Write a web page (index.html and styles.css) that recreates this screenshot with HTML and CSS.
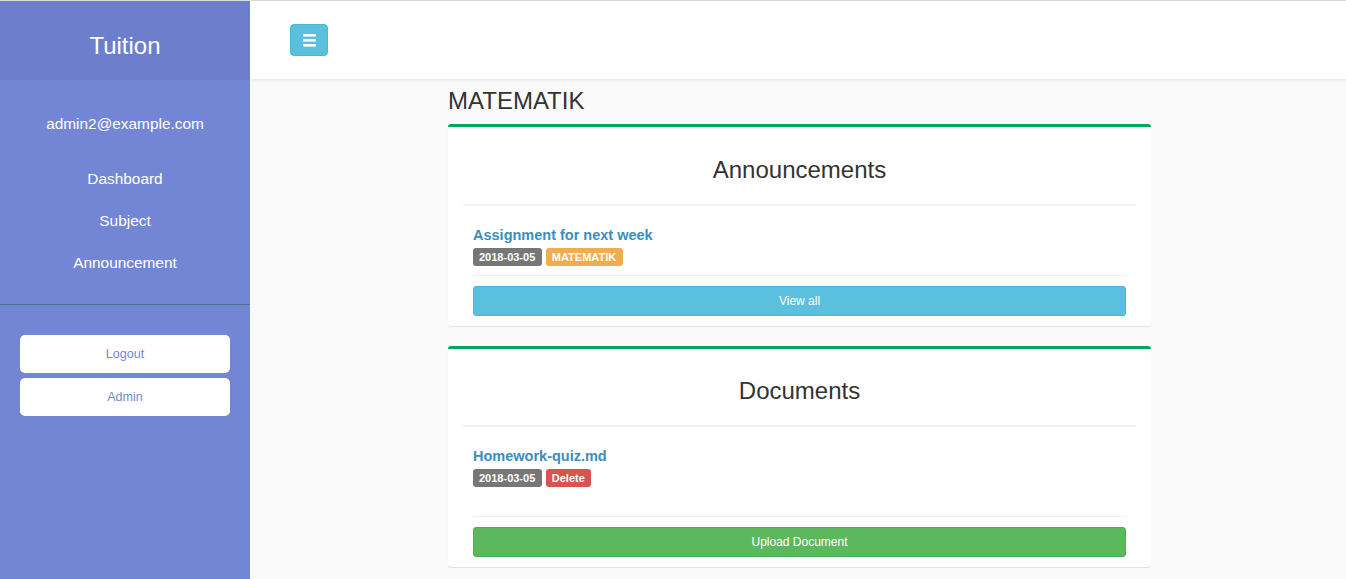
FILE: index.html
```html
<!DOCTYPE html>
<html>
<head>
<meta charset="utf-8">
<title>Tuition</title>
<link rel="stylesheet" href="styles.css">
</head>
<body>
<div class="topline"></div>
<div class="wrapper">
  <nav class="sidebar">
    <div class="sidebar-header"><h3>Tuition</h3></div>
    <ul class="components">
      <p class="user">admin2@example.com</p>
      <li><a href="#">Dashboard</a></li>
      <li><a href="#">Subject</a></li>
      <li><a href="#">Announcement</a></li>
    </ul>
    <ul class="ctas">
      <li><a href="#">Logout</a></li>
      <li><a href="#">Admin</a></li>
    </ul>
  </nav>
  <div class="main">
    <div class="navbar">
      <button class="toggle" type="button">
        <svg width="13" height="13" viewBox="0 0 13 13"><rect x="0" y="0" width="13" height="2.6" fill="#fff"/><rect x="0" y="5" width="13" height="2.6" fill="#fff"/><rect x="0" y="10" width="13" height="2.6" fill="#fff"/></svg>
      </button>
    </div>
    <div class="content">
      <div class="column">
        <h3 class="page-title">MATEMATIK</h3>
        <div class="box">
          <div class="box-header"><h3>Announcements</h3></div>
          <div class="box-body">
            <div class="item">
              <a class="item-title" href="#">Assignment for next week</a>
              <div class="labels"><span class="label label-default">2018-03-05</span><span class="label label-warning">MATEMATIK</span></div>
            </div>
            <a class="btn btn-info" href="#">View all</a>
          </div>
        </div>
        <div class="box box-docs">
          <div class="box-header"><h3>Documents</h3></div>
          <div class="box-body">
            <div class="item item-tall">
              <a class="item-title" href="#">Homework-quiz.md</a>
              <div class="labels"><span class="label label-default">2018-03-05</span><span class="label label-danger">Delete</span></div>
            </div>
            <a class="btn btn-success" href="#">Upload Document</a>
          </div>
        </div>
      </div>
    </div>
  </div>
</div>
</body>
</html>
```
FILE: styles.css
```css
* { box-sizing: border-box; }
html, body { margin: 0; padding: 0; }
body {
  font-family: "Liberation Sans", Arial, Helvetica, sans-serif;
  font-size: 14px;
  line-height: 20px;
  color: #333;
  background: #fafafa;
  height: 579px;
  overflow: hidden;
}
.topline { height: 1px; background: #dcdcdc; }
.wrapper { display: flex; height: 578px; }

.sidebar {
  width: 250px;
  flex: 0 0 250px;
  background: #7386d5;
  color: #fff;
}
.sidebar-header {
  height: 79px;
  background: #6d7fcc;
  padding-top: 32px;
}
.sidebar-header h3 {
  margin: 0;
  font-size: 24px;
  font-weight: 400;
  line-height: 26px;
  text-align: center;
}
.sidebar ul { list-style: none; margin: 0; padding: 0; }
.components {
  padding: 20px 0 20px !important;
  border-bottom: 1px solid #47748b;
  text-align: center;
}
.user {
  margin: 0 0 23px;
  padding: 13px 10px 0;
  font-size: 15.4px;
  line-height: 22px;
}
.components a {
  display: block;
  padding: 10px;
  font-size: 15.4px;
  line-height: 22px;
  color: #fff;
  text-decoration: none;
}
.ctas { padding: 30px 20px 0 !important; }
.ctas a {
  display: block;
  height: 38px;
  padding: 10px;
  margin-bottom: 5px;
  background: #fff;
  color: #7386d5;
  border-radius: 5px;
  text-align: center;
  font-size: 12.6px;
  line-height: 18px;
  text-decoration: none;
}

.main { flex: 1; display: flex; flex-direction: column; min-width: 0; }
.navbar {
  flex: 0 0 78px;
  height: 78px;
  background: #fff;
  padding: 23px 0 0 40px;
  box-shadow: 1px 1px 3px rgba(0,0,0,0.1);
  position: relative;
  z-index: 1;
}
.toggle {
  width: 38px;
  height: 32px;
  border: 1px solid #46b8da;
  border-radius: 4px;
  background: #5bc0de;
  display: flex;
  align-items: center;
  justify-content: center;
  padding: 0;
}
.toggle svg { display: block; }

.content { flex: 1 0 auto; padding-top: 9px; }
.column { margin-left: 198px; width: 703px; }
.page-title {
  margin: 0 0 10px;
  font-size: 24px;
  font-weight: 400;
  line-height: 26px;
  color: #333;
}
.box {
  background: #fff;
  border-top: 3px solid #00a65a;
  border-radius: 3px;
  box-shadow: 0 1px 1px rgba(0,0,0,0.1);
  margin-bottom: 20px;
  padding: 0 15px;
}
.box-header {
  padding: 30px 0 21px;
  border-bottom: 2px solid #f2f2f2;
}
.box-docs .box-header { padding-top: 29px; }
.box-header h3 {
  margin: 0;
  font-size: 24px;
  font-weight: 400;
  line-height: 26px;
  text-align: center;
  color: #333;
}
.box-body { padding: 0 10px 10px; }
.item {
  padding: 19px 0 9px;
  border-bottom: 1px solid #f0f0f0;
}
.item-tall { padding-bottom: 29px; }
.item-title {
  display: block;
  font-size: 14.5px;
  font-weight: 700;
  line-height: 20px;
  color: #3c8dbc;
  text-decoration: none;
}
.labels { display: flex; gap: 4px; margin-top: 3px; }
.label {
  display: inline-block;
  height: 18px;
  padding: 3px 6.5px 3px 6px;
  font-size: 11px;
  font-weight: 700;
  line-height: 12px;
  color: #fff;
  border-radius: 3px;
}
.label-default { background: #777; }
.label-warning { background: #f0ad4e; }
.label-danger { background: #d9534f; }
.btn {
  display: block;
  margin-top: 10px;
  height: 30px;
  padding: 5px 10px;
  font-size: 12px;
  line-height: 18px;
  text-align: center;
  color: #fff;
  border-radius: 3px;
  text-decoration: none;
}
.btn-info { background: #5bc0de; border: 1px solid #46b8da; }
.btn-success { background: #5cb85c; border: 1px solid #4cae4c; }
```
